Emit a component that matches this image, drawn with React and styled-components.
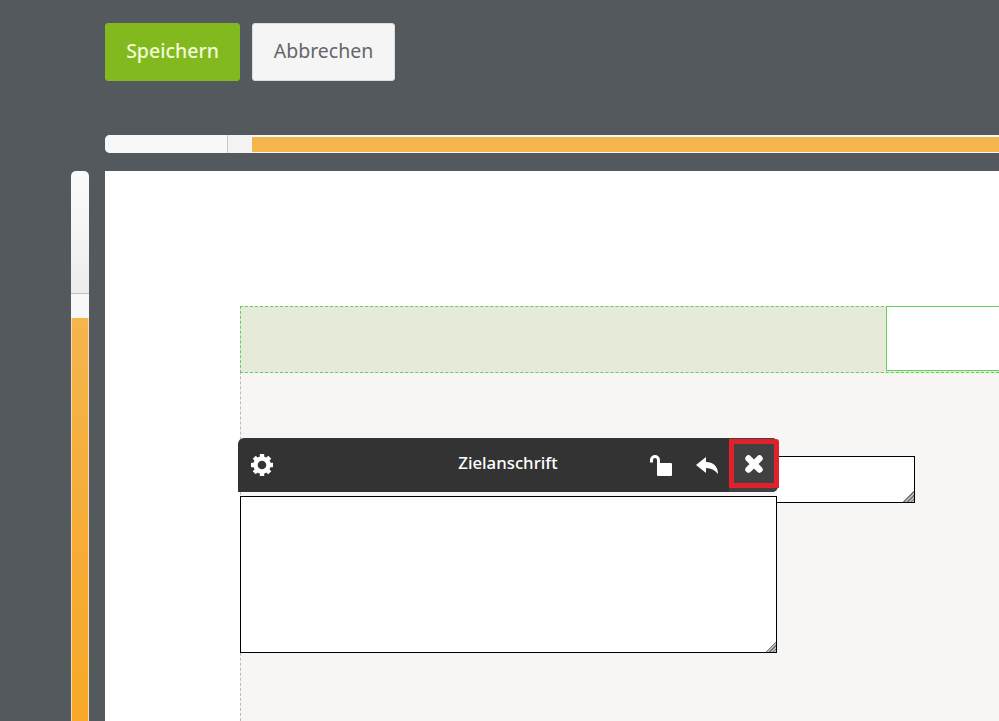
import React from 'react';
import styled, { createGlobalStyle } from 'styled-components';

const GlobalStyle = createGlobalStyle`
    body, html {
        margin: 0;
        padding: 0;
        width: 100%;
        height: 100%;
        overflow: hidden;
        background-color: #54595e;
        font-family: "Noto Sans", "Open Sans", sans-serif;
    }
`;

const PageContainer = styled.div`
    width: 999px;
    height: 721px;
    overflow: hidden;
`;

const ButtonContainer = styled.div`
    display: flex;
    gap: 12px;
    padding: 23px 0 0 105px;
`;

const ActionButton = styled.button`
    height: 58px;
    width: ${(props) => props.$width}px;
    padding: 0 0 4px;
    border: 1px solid ${(props) => (props.$primary ? '#82b91e' : '#dddddd')};
    border-radius: 3px;
    background-color: ${(props) => (props.$primary ? '#82b91e' : '#f5f5f5')};
    color: ${(props) => (props.$primary ? '#f2fbd8' : '#666666')};
    font-family: inherit;
    font-size: 19.5px;
    font-weight: ${(props) => (props.$primary ? 500 : 400)};
`;

const HorizontalRuler = styled.div`
    display: flex;
    height: 18px;
    margin: 54px 0 18px 105px;
    background-color: #f7f7f7;
    border-radius: 5px 0 0 5px;
    overflow: hidden;
`;

const RulerHandle = styled.div`
    width: 122px;
    background-color: #f8f8f8;
    border-right: 1px solid #c8c8c8;
`;

const RulerGap = styled.div`
    width: 24px;
    background-color: #f3f3f3;
`;

const RulerFill = styled.div`
    flex: 1;
    margin: 2px 0 1px;
    background-color: #f5b54d;
`;

const EditorRow = styled.div`
    display: flex;
    gap: 16px;
    padding-left: 71px;
    height: 550px;
`;

const VerticalRuler = styled.div`
    width: 18px;
    display: flex;
    flex-direction: column;
    flex-shrink: 0;
    border-radius: 5px 5px 0 0;
    overflow: hidden;
`;

const VerticalHandle = styled.div`
    height: 122px;
    background: linear-gradient(#fafafa 0%, #f6f6f6 40%, #ececec 100%);
    border-bottom: 1px solid #bdbdbd;
`;

const VerticalGap = styled.div`
    height: 24px;
    background-color: #f8f8f8;
`;

const VerticalFill = styled.div`
    flex: 1;
    border-left: 1px solid #f0dcb8;
    border-right: 1px solid #f0dcb8;
    background: linear-gradient(#f5b54d 0%, #f6ad38 50%, #f7a827 100%);
`;

const Paper = styled.div`
    position: relative;
    flex: 1;
    min-width: 0;
    padding: 135px 0 0 135px;
    background-color: #ffffff;
`;

const Section = styled.div`
    height: 415px;
    border-left: 1px dashed #bdbab2;
    background-color: #f7f6f4;
`;

const SectionHeader = styled.div`
    display: flex;
    height: 67px;
    margin-left: -1px;
    box-sizing: border-box;
    border: 1px dashed #5fcf5f;
    border-right: 0;
    background-color: #e6ead9;
`;

const HeaderSpacer = styled.div`
    width: 645px;
    flex-shrink: 0;
`;

const HeaderField = styled.div`
    flex: 1;
    height: 65px;
    margin-top: -1px;
    box-sizing: border-box;
    border: 1px solid #5fcf5f;
    border-right: 0;
    background-color: #ffffff;
`;

const FieldBox = styled.textarea`
    position: absolute;
    left: ${(props) => props.$left}px;
    top: ${(props) => props.$top}px;
    width: ${(props) => props.$width}px;
    height: ${(props) => props.$height}px;
    box-sizing: border-box;
    margin: 0;
    padding: 0;
    border: 1px solid #000000;
    border-left-width: ${(props) => (props.$flush ? 0 : 1)}px;
    background: #ffffff
        linear-gradient(135deg, transparent 50%, #777 50% 58%, #bbb 58% 66%, #777 66% 74%, #bbb 74% 82%, #777 82% 90%, #bbb 90%)
        no-repeat right 0 bottom 0 / 11px 11px;
    resize: none;
    outline: none;
`;

const FieldToolbar = styled.div`
    position: absolute;
    left: 133px;
    top: 267px;
    width: 540px;
    height: 54px;
    display: flex;
    align-items: center;
    box-sizing: border-box;
    padding-left: 12px;
    background-color: #333333;
    border-radius: 6px 6px 6px 0;
    color: #ffffff;
`;

const ToolbarTitle = styled.div`
    position: absolute;
    left: 0;
    width: 540px;
    top: 13px;
    text-align: center;
    font-size: 16.8px;
    font-weight: 500;
    line-height: 24px;
    color: #ffffff;
`;

const ToolIcon = styled.svg`
    display: block;
    width: 24px;
    height: 24px;
    flex-shrink: 0;
`;

const ToolGroup = styled.div`
    margin-left: auto;
    display: flex;
    align-items: center;
    height: 100%;
    gap: 22px;
`;

const CloseCell = styled.div`
    width: 49px;
    height: 54px;
    margin-left: -12px;
    border-radius: 0 6px 6px 0;
    background-color: #414141;
`;

const CloseButton = styled.div`
    display: flex;
    align-items: center;
    justify-content: center;
    width: 50px;
    height: 49px;
    box-sizing: border-box;
    margin-top: 1px;
    border: 5px solid #e2202c;
    border-radius: 0 3px 0 0;
    background-color: #414141;
`;

const GearIcon = () => (
    <ToolIcon viewBox="0 0 24 24">
        <circle cx="12" cy="12" r="6.5" fill="none" stroke="#fff" strokeWidth="4.4" />
        {[0, 45, 90, 135, 180, 225, 270, 315].map((angle) => (
            <rect key={angle} x="9.8" y="1" width="4.4" height="5" fill="#fff" transform={`rotate(${angle} 12 12)`} />
        ))}
    </ToolIcon>
);

const UnlockIcon = () => (
    <ToolIcon viewBox="0 0 24 24">
        <path d="M2.5 9.5V7a3.5 3.5 0 0 1 7 0v4" fill="none" stroke="#fff" strokeWidth="3" />
        <rect x="8" y="10" width="15" height="13" rx="1" fill="#fff" />
    </ToolIcon>
);

const ReplyIcon = () => (
    <ToolIcon viewBox="0 0 24 24">
        <path d="M1 12L11 4v5c7 0 12 4 12 12c-3-4-7-6-12-6v5z" fill="#fff" />
    </ToolIcon>
);

const CloseIcon = () => (
    <ToolIcon viewBox="0 0 24 24">
        <path d="M6.5 6.5l11 11M17.5 6.5l-11 11" fill="none" stroke="#fff" strokeWidth="6.4" strokeLinecap="round" />
    </ToolIcon>
);

const App = () => {
    return (
        <>
            <GlobalStyle />
            <PageContainer>
                <ButtonContainer>
                    <ActionButton $primary $width={135}>Speichern</ActionButton>
                    <ActionButton $width={143}>Abbrechen</ActionButton>
                </ButtonContainer>
                <HorizontalRuler>
                    <RulerHandle />
                    <RulerGap />
                    <RulerFill />
                </HorizontalRuler>
                <EditorRow>
                    <VerticalRuler>
                        <VerticalHandle />
                        <VerticalGap />
                        <VerticalFill />
                    </VerticalRuler>
                    <Paper>
                        <Section>
                            <SectionHeader>
                                <HeaderSpacer />
                                <HeaderField />
                            </SectionHeader>
                        </Section>
                        <FieldBox $flush $left={672} $top={285} $width={138} $height={47} />
                        <FieldBox $left={135} $top={325} $width={537} $height={157} />
                        <FieldToolbar>
                            <GearIcon />
                            <ToolbarTitle>Zielanschrift</ToolbarTitle>
                            <ToolGroup>
                                <UnlockIcon />
                                <ReplyIcon />
                                <CloseCell>
                                    <CloseButton><CloseIcon /></CloseButton>
                                </CloseCell>
                            </ToolGroup>
                        </FieldToolbar>
                    </Paper>
                </EditorRow>
            </PageContainer>
        </>
    );
};

export default App;
